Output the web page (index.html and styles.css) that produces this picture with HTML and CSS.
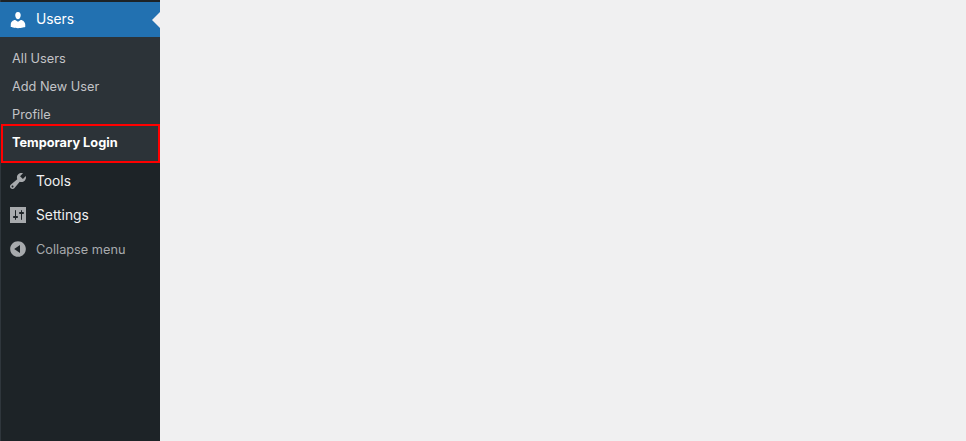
FILE: index.html
```html
<!DOCTYPE html>
<html lang="en">
<head>
<meta charset="utf-8">
<title>Users</title>
<link rel="stylesheet" href="styles.css">
</head>
<body>
<nav class="sidebar">
  <a class="menu-item current">
    <svg class="icon" viewBox="0 0 20 20"><path d="M10 9.25c-2.27 0-2.73-3.44-2.73-3.44C7 4.02 7.82 2 9.97 2c2.16 0 2.98 2.02 2.71 3.81 0 0-.41 3.44-2.68 3.44zm0 2.57L12.72 10c2.39 0 4.52 2.33 4.52 4.53v2.49s-3.65 1.13-7.24 1.13c-3.65 0-7.24-1.13-7.24-1.13v-2.49c0-2.25 1.94-4.48 4.47-4.48z"/></svg>
    <span>Users</span>
  </a>
  <ul class="submenu">
    <li>All Users</li>
    <li>Add New User</li>
    <li>Profile</li>
    <li class="active">Temporary Login</li>
  </ul>
  <a class="menu-item">
    <svg class="icon" viewBox="0 0 20 20"><path d="M16.68 9.77c-1.34 1.34-3.3 1.67-4.95.99l-5.41 6.52c-.99.99-2.59.99-3.58 0s-.99-2.59 0-3.57l6.52-5.42c-.68-1.65-.35-3.61.99-4.95 1.28-1.28 3.12-1.62 4.72-1.06l-2.89 2.89 2.82 2.82 2.86-2.87c.53 1.58.18 3.39-1.08 4.65zM3.81 16.21c.4.39 1.04.39 1.43 0 .4-.4.4-1.04 0-1.43-.39-.4-1.03-.4-1.43 0-.39.39-.39 1.03 0 1.43z"/></svg>
    <span>Tools</span>
  </a>
  <a class="menu-item">
    <svg class="icon" viewBox="0 0 20 20"><path d="M18 18V2H2v16zM8 11h1c.55 0 1 .45 1 1s-.45 1-1 1H8v1.5c0 .28-.22.5-.5.5s-.5-.22-.5-.5V13H6c-.55 0-1-.45-1-1s.45-1 1-1h1V5.5c0-.28.22-.5.5-.5s.5.22.5.5V11zm5-2h-1c-.55 0-1-.45-1-1s.45-1 1-1h1V5.5c0-.28.22-.5.5-.5s.5.22.5.5V7h1c.55 0 1 .45 1 1s-.45 1-1 1h-1v5.5c0 .28-.22.5-.5.5s-.5-.22-.5-.5V9z"/></svg>
    <span>Settings</span>
  </a>
  <a class="menu-item collapse">
    <svg class="icon" viewBox="0 0 20 20"><path d="M10 2.16c4.33 0 7.84 3.51 7.84 7.84s-3.51 7.84-7.84 7.84S2.16 14.33 2.16 10 5.71 2.16 10 2.16zm2 11.72V6.12L6.18 9.97 12 13.88z"/></svg>
    <span>Collapse menu</span>
  </a>
</nav>
<main class="content"></main>
</body>
</html>
```

FILE: styles.css
```css
html, body {
  margin: 0;
  height: 100%;
}

body {
  display: flex;
  background: #f0f0f1;
  font-family: Inter, "Liberation Sans", sans-serif;
  overflow: hidden;
}

.sidebar {
  box-sizing: border-box;
  width: 160px;
  height: 441px;
  flex: none;
  padding-top: 2px;
  background: #1d2327;
  border-left: 1px solid #2f363c;
}

.content {
  flex: 1;
}

.menu-item {
  display: flex;
  align-items: center;
  height: 34px;
  margin-left: -1px;
  font-size: 13.8px;
  color: #f0f0f1;
}

.menu-item span {
  margin-left: 8px;
  padding-bottom: 1px;
}

.icon {
  width: 20px;
  height: 20px;
  margin-left: 8px;
  fill: #a7aaad;
}

.current {
  position: relative;
  height: 35px;
  background: #2271b1;
  color: #fff;
}

.current span {
  padding-bottom: 2px;
}

.current .icon {
  fill: #fff;
}

.current::after {
  content: "";
  position: absolute;
  right: 0;
  top: 50%;
  margin-top: -8px;
  border: 8px solid transparent;
  border-right-color: #f0f0f1;
  border-left-width: 0;
}

.submenu {
  list-style: none;
  margin: 0 0 1px -1px;
  padding: 7px 0;
  background: #2c3338;
  font-size: 12.75px;
  color: #c3c4c7;
}

.submenu li {
  position: relative;
  height: 28px;
  line-height: 30px;
  padding-left: 12px;
}

.active {
  font-weight: 700;
  color: #fff;
}

.active::after {
  content: "";
  position: absolute;
  left: 1px;
  right: 0;
  top: -4px;
  bottom: -7px;
  border: 2px solid #f00;
}

.menu-item.collapse {
  font-size: 12.75px;
  color: #a7aaad;
}

.menu-item.collapse span {
  padding-bottom: 0;
}
```
